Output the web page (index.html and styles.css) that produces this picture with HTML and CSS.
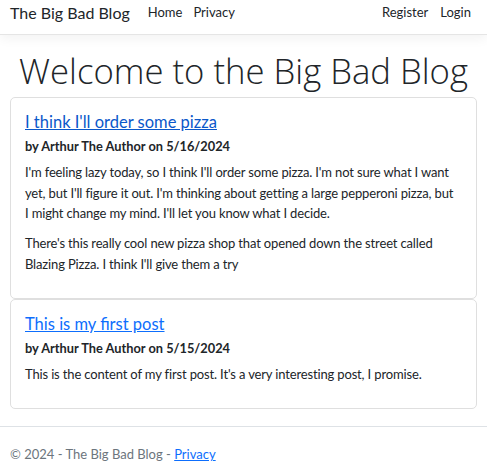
FILE: index.html
```html
<!DOCTYPE html>
<html lang="en">
<head>
<meta charset="utf-8">
<title>The Big Bad Blog</title>
<link rel="stylesheet" href="styles.css">
</head>
<body>
<header class="navbar">
  <div class="nav-left">
    <a class="brand" href="#">The Big Bad Blog</a>
    <a class="nav-link" href="#">Home</a>
    <a class="nav-link" href="#">Privacy</a>
  </div>
  <div class="nav-right">
    <a class="nav-link" href="#">Register</a>
    <a class="nav-link" href="#">Login</a>
  </div>
</header>
<main class="container">
  <h1 class="display">Welcome to the Big Bad Blog</h1>
  <div class="card">
    <h5 class="card-title"><a class="visited" href="#">I think I'll order some pizza</a></h5>
    <h6 class="card-subtitle">by Arthur The Author on 5/16/2024</h6>
    <p>I'm feeling lazy today, so I think I'll order some pizza. I'm not sure what I want yet, but I'll figure it out. I'm thinking about getting a large pepperoni pizza, but I might change my mind. I'll let you know what I decide.</p>
    <p>There's this really cool new pizza shop that opened down the street called Blazing Pizza. I think I'll give them a try</p>
  </div>
  <div class="card">
    <h5 class="card-title"><a href="#">This is my first post</a></h5>
    <h6 class="card-subtitle">by Arthur The Author on 5/15/2024</h6>
    <p>This is the content of my first post. It's a very interesting post, I promise.</p>
  </div>
</main>
<footer class="footer">
  <div class="footer-inner">&copy; 2024 - The Big Bad Blog - <a href="#">Privacy</a></div>
</footer>
</body>
</html>
```
FILE: styles.css
```css
* { box-sizing: border-box; }
html, body { margin: 0; padding: 0; }
body {
  font-family: Lato, "Open Sans", sans-serif;
  font-size: 13px;
  line-height: 21px;
  color: #212529;
  background: #fff;
}
a { color: #0d6efd; }
.navbar {
  height: 35px;
  display: flex;
  justify-content: space-between;
  align-items: center;
  padding: 0 16px 10px 10px;
  border-bottom: 1px solid #e5e5e5;
  box-shadow: 0 3.5px 10.5px rgba(0,0,0,0.05);
}
.nav-left, .nav-right { display: flex; align-items: center; }
.brand {
  font-size: 16px;
  color: #212529;
  text-decoration: none;
  margin-right: 12px;
}
.nav-link {
  color: #212529;
  text-decoration: none;
  padding: 0 6px;
}
.nav-left .nav-link + .nav-link { padding-left: 5px; }
.nav-right .nav-link:last-child { padding-right: 0; }
.container { padding: 0 10px 17px; }
.display {
  font-family: "Open Sans", sans-serif;
  font-weight: 300;
  font-size: 34.7px;
  line-height: 1.2;
  text-align: center;
  margin: 15px 0 5px;
  color: #212529;
}
.card {
  border: 1px solid #dfdfdf;
  border-radius: 5px;
  padding: 14px 18px 14px 14px;
}
.card-title {
  font-size: 16.5px;
  font-weight: 400;
  line-height: 20px;
  margin: 0 0 6px;
}
.card-title a.visited { color: #0a58ca; }
.card-subtitle {
  font-size: 12.8px;
  font-weight: 700;
  line-height: 16px;
  margin: 0 0 8.5px;
}
.card p {
  margin: 0 0 9.5px;
  line-height: 20.5px;
  letter-spacing: -0.15px;
}
.footer {
  border-top: 1px solid #dee2e6;
  color: #6c757d;
  line-height: 54px;
  white-space: nowrap;
}
.footer-inner { padding: 0 10px; }
```
